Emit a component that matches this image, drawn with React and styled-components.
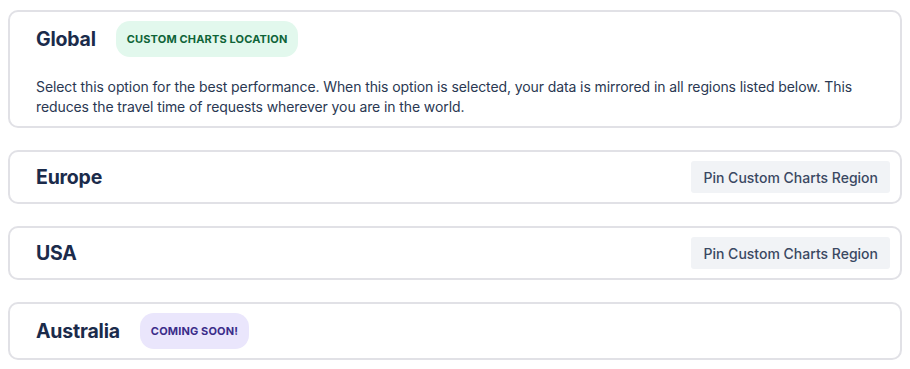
import React from "react";
import styled, { createGlobalStyle } from "styled-components";

const GlobalStyle = createGlobalStyle`
  body {
    margin: 0;
    background: #ffffff;
    font-family: Inter, "Liberation Sans", sans-serif;
    -webkit-font-smoothing: antialiased;
  }
`;

const regions = [
  {
    name: "Global",
    badge: { label: "Custom Charts Location", tone: "green" },
    description:
      "Select this option for the best performance. When this option is selected, your data is mirrored in all regions listed below. This reduces the travel time of requests wherever you are in the world.",
  },
  { name: "Europe", pin: true },
  { name: "USA", pin: true },
  { name: "Australia", badge: { label: "Coming soon!", tone: "purple" } },
];

const tones = {
  green: { bg: "#e2f8ed", fg: "#0e6438" },
  purple: { bg: "#eae6fc", fg: "#3b2d8a" },
};

const List = styled.div`
  display: flex;
  flex-direction: column;
  gap: 22px;
  padding: 10px 8px;
`;

const Card = styled.div`
  border: 2px solid #e1e1e6;
  border-radius: 10px;
  padding: 9px 10px 9px 26px;
  background: #fff;
`;

const Header = styled.div`
  display: flex;
  align-items: center;
  gap: 20px;
  min-height: 32px;
`;

const Title = styled.h3`
  margin: 0;
  font-size: 19.5px;
  font-weight: 700;
  color: #1b2b4b;
  letter-spacing: -0.2px;
`;

const Badge = styled.span`
  display: inline-flex;
  align-items: center;
  height: 36px;
  padding: 0 11px;
  border-radius: 14px;
  background: ${(p) => tones[p.tone].bg};
  color: ${(p) => tones[p.tone].fg};
  font-size: 11px;
  font-weight: 700;
  text-transform: uppercase;
  letter-spacing: 0.15px;
`;

const PinButton = styled.button`
  margin-left: auto;
  height: 32px;
  padding: 0 12px;
  border: none;
  border-radius: 3px;
  background: #f1f3f6;
  color: #3a4862;
  font-family: inherit;
  font-size: 14px;
  font-weight: 500;
  cursor: pointer;
`;

const Description = styled.p`
  margin: 20px 0 0;
  font-size: 14px;
  line-height: 20px;
  letter-spacing: -0.1px;
  color: #2a3852;
  padding-right: 14px;
`;

const App = () => {
  return (
    <>
      <GlobalStyle />
      <List>
        {regions.map((r) => (
          <Card key={r.name}>
            <Header>
              <Title>{r.name}</Title>
              {r.badge && <Badge tone={r.badge.tone}>{r.badge.label}</Badge>}
              {r.pin && <PinButton>Pin Custom Charts Region</PinButton>}
            </Header>
            {r.description && <Description>{r.description}</Description>}
          </Card>
        ))}
      </List>
    </>
  );
};

export default App;
